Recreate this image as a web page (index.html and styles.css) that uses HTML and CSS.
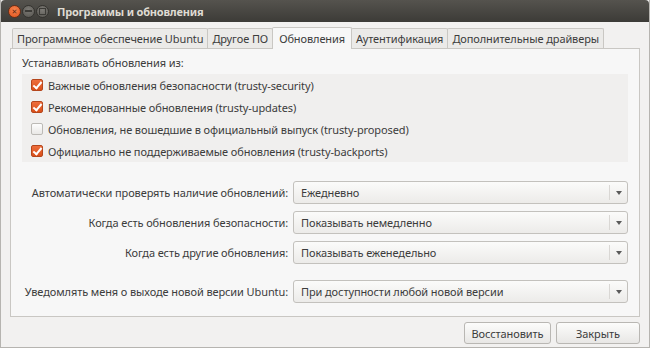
FILE: index.html
```html
<!doctype html>
<html>
  <head>
    <meta charset="utf-8">
    <title>Программы и обновления</title>
    <link rel="stylesheet" href="styles.css">
  </head>
  <body>
    <div class="window">
      <div class="titlebar">
        <div class="wm-buttons">
          <span class="wm wm-close">&#x2715;</span>
          <span class="wm wm-min"></span>
          <span class="wm wm-max"></span>
        </div>
        <div class="title">Программы и обновления</div>
      </div>

      <div class="body">
        <div class="tabs">
          <div class="tab">Программное обеспечение Ubuntu</div>
          <div class="tab">Другое ПО</div>
          <div class="tab active">Обновления</div>
          <div class="tab">Аутентификация</div>
          <div class="tab">Дополнительные драйверы</div>
        </div>

        <div class="page">
          <div class="group-label">Устанавливать обновления из:</div>
          <div class="sources">
            <label class="check"><span class="box on"></span>Важные обновления безопасности (trusty-security)</label>
            <label class="check"><span class="box on"></span>Рекомендованные обновления (trusty-updates)</label>
            <label class="check"><span class="box"></span>Обновления, не вошедшие в официальный выпуск (trusty-proposed)</label>
            <label class="check"><span class="box on"></span>Официально не поддерживаемые обновления (trusty-backports)</label>
          </div>

          <div class="settings">
            <div class="row">
              <div class="row-label">Автоматически проверять наличие обновлений:</div>
              <div class="combo"><span class="combo-text">Ежедневно</span><span class="combo-arrow"></span></div>
            </div>
            <div class="row">
              <div class="row-label">Когда есть обновления безопасности:</div>
              <div class="combo"><span class="combo-text">Показывать немедленно</span><span class="combo-arrow"></span></div>
            </div>
            <div class="row">
              <div class="row-label">Когда есть другие обновления:</div>
              <div class="combo"><span class="combo-text">Показывать еженедельно</span><span class="combo-arrow"></span></div>
            </div>
            <div class="row row-gap">
              <div class="row-label">Уведомлять меня о выходе новой версии Ubuntu:</div>
              <div class="combo"><span class="combo-text">При доступности любой новой версии</span><span class="combo-arrow"></span></div>
            </div>
          </div>
        </div>

        <div class="actions">
          <button class="btn btn-revert">Восстановить</button>
          <button class="btn btn-close">Закрыть</button>
        </div>
      </div>
    </div>
  </body>
</html>
```

FILE: styles.css
```css
* { margin: 0; padding: 0; box-sizing: border-box; }
html, body {
  width: 100%;
  height: 100%;
  overflow: hidden;
  font-family: "Noto Sans", "DejaVu Sans", sans-serif;
  font-size: 11px;
  letter-spacing: -0.1px;
  color: #3c3c3c;
  white-space: nowrap;
}
.window {
  width: 650px;
  height: 348px;
  background: #f2f1f0;
  border: 1px solid #b6b4b0;
  border-top: none;
  display: flex;
  flex-direction: column;
}
.titlebar {
  height: 22px;
  flex: none;
  display: flex;
  align-items: center;
  background: linear-gradient(to bottom, #55534e, #3c3b37);
  color: #dfdbd2;
  border-radius: 4px 4px 0 0;
}
.wm-buttons {
  display: flex;
  gap: 1px;
  padding-left: 7px;
  width: 56px;
}
.wm {
  width: 13px;
  height: 13px;
  border-radius: 50%;
  display: flex;
  align-items: center;
  justify-content: center;
  font-size: 7px;
  font-weight: bold;
  letter-spacing: 0;
  color: #5a2a14;
  background: radial-gradient(circle at 50% 35%, #7d7b76, #55534e);
  border: 1px solid #34332f;
}
.wm-close {
  background: radial-gradient(circle at 50% 35%, #f6844f, #e0531c);
  border-color: #6a2e16;
}
.wm-min::after {
  content: "";
  width: 7px;
  height: 2px;
  background: #3c3b37;
}
.wm-max::after {
  content: "";
  width: 5px;
  height: 5px;
  border: 1px solid #3c3b37;
}
.title {
  font-weight: bold;
  font-size: 11px;
  letter-spacing: -0.2px;
}
.body {
  flex: 1;
  display: flex;
  flex-direction: column;
  padding: 5px 9px 0 9px;
}
.tabs {
  display: flex;
  align-items: flex-end;
  padding-left: 2px;
  height: 21px;
  position: relative;
  z-index: 1;
}
.tab {
  height: 20px;
  padding: 0 4px;
  display: flex;
  align-items: center;
  background: #ebeae8;
  border: 1px solid #c9c7c3;
  border-bottom: none;
  margin-right: -1px;
  border-radius: 2px 2px 0 0;
}
.tab.active {
  height: 22px;
  margin-bottom: -1px;
  background: #f7f7f7;
  padding: 0 6px;
}
.page {
  height: 269px;
  background: #f7f7f7;
  border: 1px solid #c9c7c3;
  padding: 6px 11px 0 11px;
}
.group-label {
  line-height: 16px;
  margin-bottom: 3px;
}
.sources {
  background: #f0efee;
  padding: 0 0 0 9px;
  display: flex;
  flex-direction: column;
}
.check {
  display: flex;
  align-items: center;
  height: 22px;
}
.box {
  width: 12px;
  height: 12px;
  margin-right: 5px;
  border: 1px solid #bcbab6;
  border-radius: 2px;
  background: linear-gradient(to bottom, #fdfdfd, #e9e8e6);
  position: relative;
}
.box.on {
  background: linear-gradient(to bottom, #ee6e3c, #d9501a);
  border-color: #b5461c;
}
.box.on::after {
  content: "";
  position: absolute;
  left: 3px;
  top: 0px;
  width: 3px;
  height: 7px;
  border: solid #fff;
  border-width: 0 2px 2px 0;
  transform: rotate(40deg);
}
.settings {
  display: flex;
  flex-direction: column;
  gap: 7px;
  margin-top: 19px;
}
.row {
  display: flex;
  align-items: center;
  gap: 5px;
}
.row-gap {
  margin-top: 9px;
}
.row-label {
  width: 266px;
  text-align: right;
}
.combo {
  flex: 1;
  height: 23px;
  display: flex;
  align-items: center;
  border: 1px solid #c3c1bd;
  border-radius: 3px;
  background: linear-gradient(to bottom, #fbfbfa, #ecebe9);
}
.combo-text {
  flex: 1;
  padding-left: 7px;
}
.combo-arrow {
  width: 18px;
  height: 15px;
  border-left: 1px solid #d9d7d4;
  display: flex;
  align-items: center;
  justify-content: center;
}
.combo-arrow::after {
  content: "";
  border-left: 3px solid transparent;
  border-right: 3px solid transparent;
  border-top: 4px solid #5a5a5a;
}
.actions {
  display: flex;
  justify-content: flex-end;
  gap: 5px;
  padding-top: 5px;
}
.btn {
  height: 22px;
  font-family: inherit;
  font-size: 11px;
  letter-spacing: -0.1px;
  color: #3c3c3c;
  border: 1px solid #b9b7b3;
  border-radius: 3px;
  background: linear-gradient(to bottom, #fcfcfb, #e8e7e5);
}
.btn-revert { width: 87px; }
.btn-close { width: 84px; }
```
